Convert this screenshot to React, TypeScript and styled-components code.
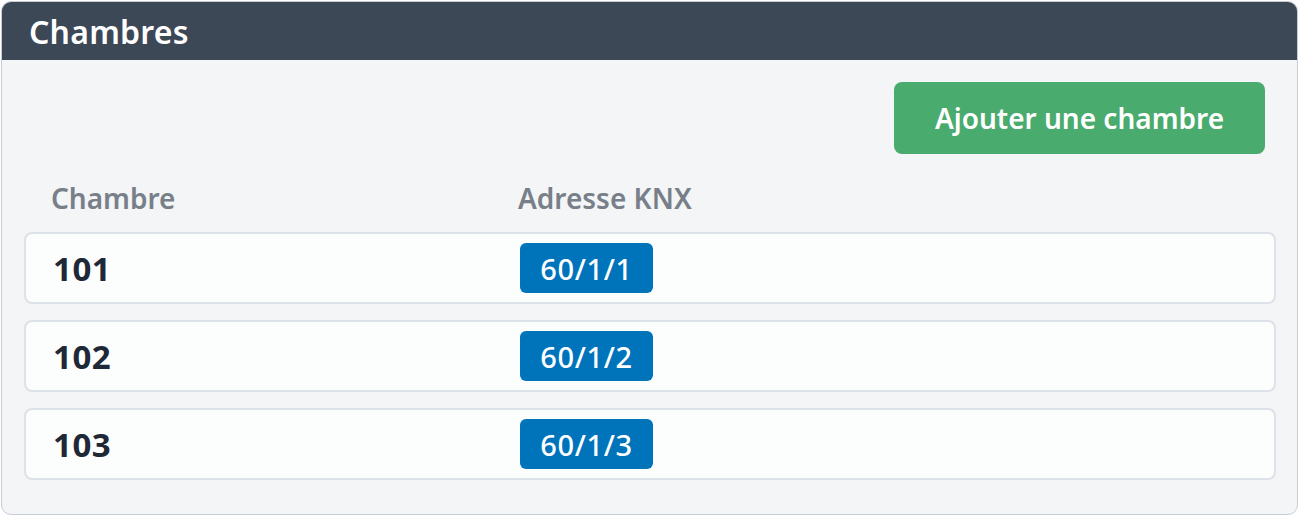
import React from 'react';
import styled, { createGlobalStyle } from 'styled-components';

const GlobalStyle = createGlobalStyle`
  html, body {
    margin: 0;
    padding: 0;
    background: #ffffff;
    font-family: "Noto Sans", "Open Sans", sans-serif;
  }
  * { box-sizing: border-box; }
`;

const ROOMS = [
  { id: '101', knx: '60/1/1' },
  { id: '102', knx: '60/1/2' },
  { id: '103', knx: '60/1/3' },
];

const Panel = styled.section`
  margin: 1px;
  width: 1297px;
  height: 514px;
  border: 1px solid #c9ced6;
  border-radius: 10px;
  overflow: hidden;
  background: #f3f5f7;
  display: flex;
  flex-direction: column;
`;

const PanelHeader = styled.header`
  height: 58px;
  background: #3d4857;
  display: flex;
  align-items: center;
  padding: 0 27px;
`;

const Title = styled.h2`
  margin: 0;
  color: #ffffff;
  font-size: 32px;
  font-weight: 600;
  letter-spacing: 0.2px;
`;

const Body = styled.div`
  padding: 22px 21px 0 22px;
  display: flex;
  flex-direction: column;
`;

const Toolbar = styled.div`
  display: flex;
  justify-content: flex-end;
  padding-right: 11px;
`;

const AddButton = styled.button`
  width: 371px;
  height: 72px;
  border: none;
  border-radius: 8px;
  background: #4aab6e;
  color: #ffffff;
  font-family: inherit;
  font-size: 28px;
  font-weight: 600;
  cursor: pointer;
`;

const Columns = styled.div`
  display: grid;
  grid-template-columns: 467px 1fr;
  padding: 0 27px;
`;

const HeadRow = styled(Columns)`
  height: 78px;
  padding-top: 10px;
  align-items: center;
  color: #787f89;
  font-size: 28px;
  font-weight: 600;
`;

const List = styled.div`
  display: flex;
  flex-direction: column;
  gap: 16px;
`;

const Row = styled(Columns)`
  height: 72px;
  align-items: center;
  background: #fcfdfd;
  border: 2px solid #dde1e8;
  border-radius: 8px;
`;

const RoomNumber = styled.span`
  color: #1e2836;
  font-size: 33px;
  font-weight: 700;
  letter-spacing: 0.5px;
`;

const Badge = styled.span`
  justify-self: start;
  height: 50px;
  width: 133px;
  display: inline-flex;
  align-items: center;
  justify-content: center;
  background: #0074bb;
  color: #ffffff;
  border-radius: 6px;
  font-size: 29px;
  font-weight: 500;
  letter-spacing: 0.6px;
`;

export default function App() {
  return (
    <>
      <GlobalStyle />
      <Panel>
        <PanelHeader>
          <Title>Chambres</Title>
        </PanelHeader>
        <Body>
          <Toolbar>
            <AddButton>Ajouter une chambre</AddButton>
          </Toolbar>
          <HeadRow>
            <span>Chambre</span>
            <span>Adresse KNX</span>
          </HeadRow>
          <List>
            {ROOMS.map(r => (
              <Row key={r.id}>
                <RoomNumber>{r.id}</RoomNumber>
                <Badge>{r.knx}</Badge>
              </Row>
            ))}
          </List>
        </Body>
      </Panel>
    </>
  );
}
